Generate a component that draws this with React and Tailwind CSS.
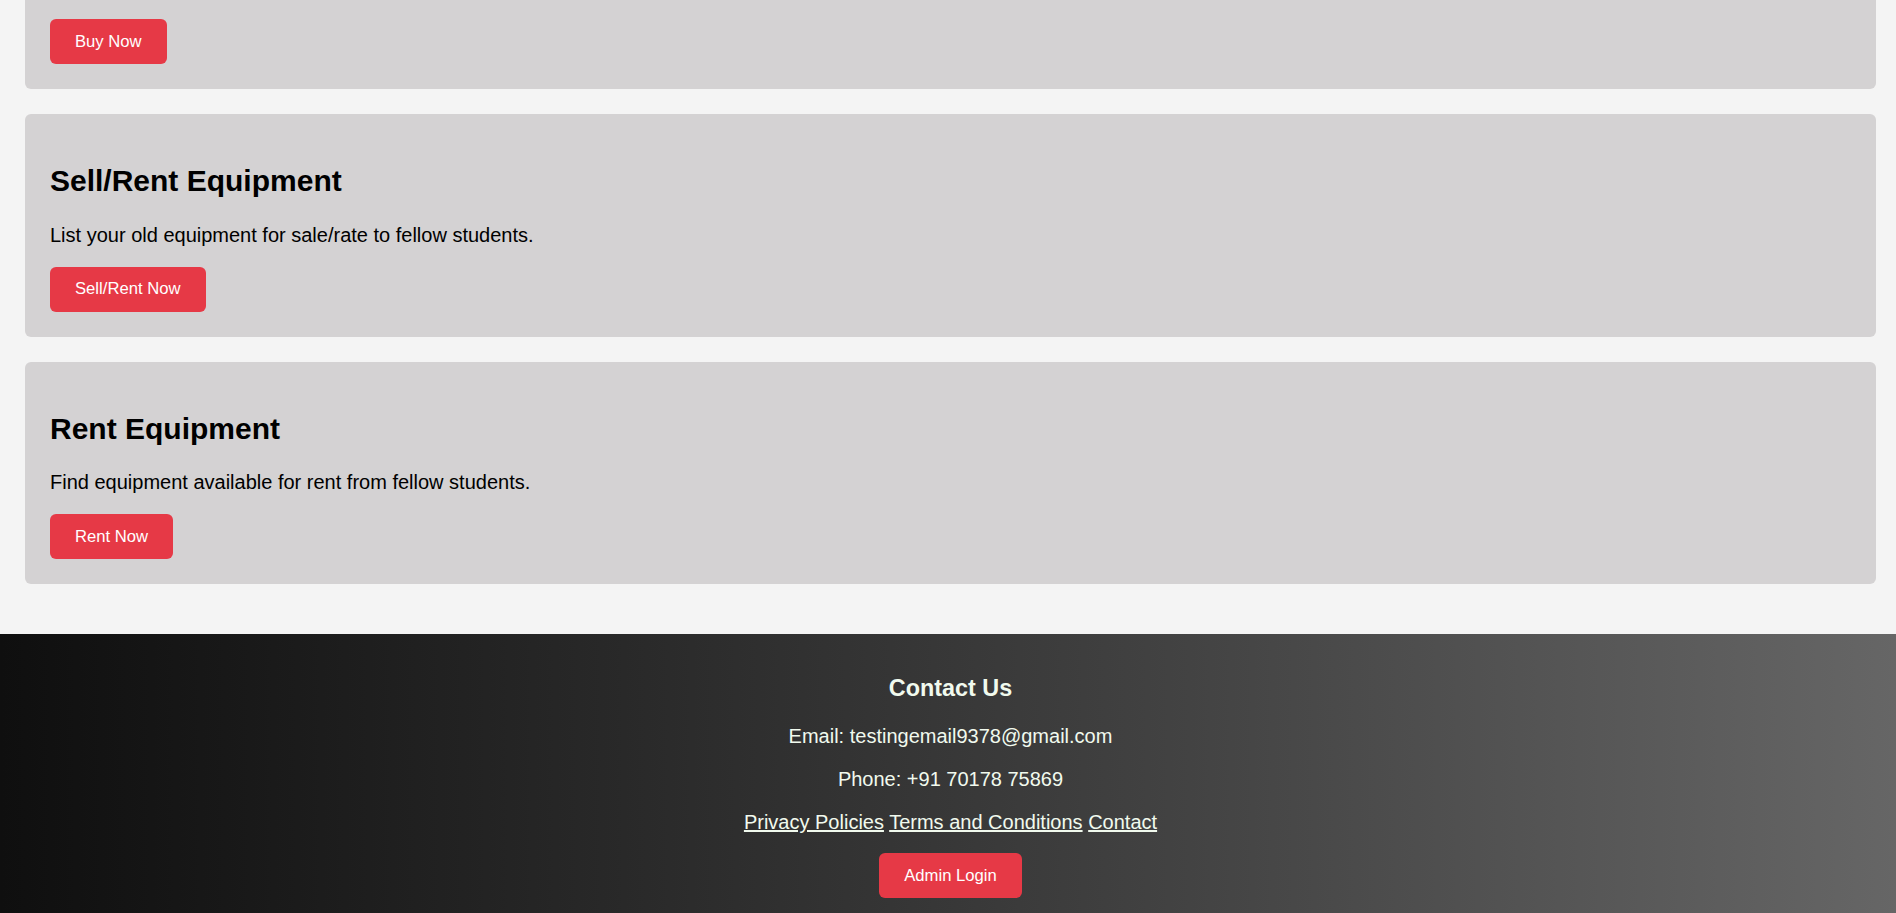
import React from 'react';

const Card = ({ title, text, button, first }) => {
  return (
    <div
      className={
        first
          ? 'bg-[#d4d2d3] rounded-b-[6px] px-[25px] pt-[19px] pb-[25px]'
          : 'bg-[#d4d2d3] rounded-[6px] p-[25px] mt-[25px]'
      }
    >
      {title && (
        <h2 className="text-[30px] font-bold leading-[34.5px] mt-[25px] mb-[25px] text-black">{title}</h2>
      )}
      {text && <p className="text-[20px] leading-[23px] mb-[20px] text-black">{text}</p>}
      <button className="bg-[#e63946] text-white text-[16.67px] leading-[20px] py-[12.5px] px-[25px] rounded-[6px]">
        {button}
      </button>
    </div>
  );
};

export default function App() {
  return (
    <div className="min-h-screen bg-[#f4f4f4] font-['Liberation_Sans',Arial,sans-serif]">
      <main className="pl-[25px] pr-[20px] pb-[50px]">
        <Card first button="Buy Now" />
        <Card
          title="Sell/Rent Equipment"
          text="List your old equipment for sale/rate to fellow students."
          button="Sell/Rent Now"
        />
        <Card
          title="Rent Equipment"
          text="Find equipment available for rent from fellow students."
          button="Rent Now"
        />
      </main>
      <footer className="bg-linear-to-r from-[#0f0f0f] to-[#666666] text-center text-[#f1faee] pl-[5px] pt-[18px] pb-[18px]">
        <h3 className="text-[23.4px] font-bold leading-[27px] mt-[23.4px] mb-[23px]">Contact Us</h3>
        <p className="text-[20px] leading-[23px] mb-[20px]">Email: testingemail9378@gmail.com</p>
        <p className="text-[20px] leading-[23px] mb-[20px]">Phone: +91 70178 75869</p>
        <p className="text-[20px] leading-[23px] mb-[19px]">
          <a href="#" className="underline">Privacy Policies</a>{' '}
          <a href="#" className="underline">Terms and Conditions</a>{' '}
          <a href="#" className="underline">Contact</a>
        </p>
        <button className="bg-[#e63946] text-white text-[16.67px] leading-[20px] py-[12.5px] px-[25px] rounded-[6px]">
          Admin Login
        </button>
      </footer>
    </div>
  );
}
